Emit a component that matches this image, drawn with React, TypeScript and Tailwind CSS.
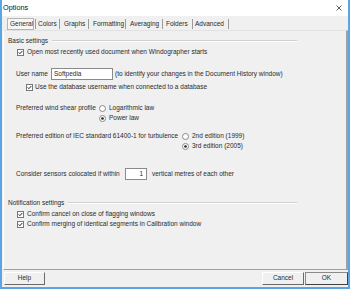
import React from "react";

const font = { fontFamily: '"Liberation Sans", Arial, sans-serif' };

function Check() {
  return (
    <svg width="7" height="7" viewBox="0 0 7 7" className="flex-none">
      <rect x="0.5" y="0.5" width="6" height="6" fill="#fff" stroke="#777" />
      <path d="M1.7 3.4 L2.9 4.7 L5.3 2" fill="none" stroke="#222" strokeWidth="1" />
    </svg>
  );
}

function Radio({ on }: { on?: boolean }) {
  return (
    <svg width="7" height="7" viewBox="0 0 7 7" className="flex-none">
      <circle cx="3.5" cy="3.5" r="3" fill="#fff" stroke="#888" />
      {on && <circle cx="3.5" cy="3.5" r="1.3" fill="#222" />}
    </svg>
  );
}

function Sep() {
  return <div className="w-[1px] h-[10px] bg-[#9a9a9a] flex-none" />;
}

function Tab({ label, w, pl }: { label: string; w: string; pl: string }) {
  return (
    <div className={`${w} ${pl} h-[12px] flex items-center flex-none whitespace-nowrap`}>{label}</div>
  );
}

function GroupTitle({ label }: { label: string }) {
  return (
    <div className="flex items-center h-[10px] w-[293px] pl-[4px]">
      <span className="whitespace-nowrap">{label}</span>
      <div className="flex-1 ml-[4px] h-[2px] border-t border-t-[#d0d0d0] border-b border-b-white" />
    </div>
  );
}

export default function App() {
  return (
    <div
      style={font}
      className="w-[350px] h-[289px] bg-[#f0f0f0] border-x-2 border-b-2 border-[#5aa5e6] flex flex-col text-[6.5px] leading-none text-[#2b2b2b] overflow-hidden"
    >
      {/* Title bar */}
      <div className="h-[16px] bg-white flex items-center justify-between pl-[1px] pr-[6px] flex-none">
        <span className="text-[7.3px] text-[#111]">Options</span>
        <svg width="6" height="6" viewBox="0 0 6 6">
          <path d="M0.5 0.5 L5.5 5.5 M5.5 0.5 L0.5 5.5" stroke="#333" strokeWidth="0.8" />
        </svg>
      </div>

      {/* Tabs */}
      <div className="mt-[2px] h-[12px] flex items-center flex-none">
        <div className="ml-[5px] w-[27px] h-[12px] pl-[2px] flex items-center border border-[#b4b4b4] bg-[#f6f6f6] whitespace-nowrap">
          General
        </div>
        <div className="w-[1px]" />
        <Sep />
        <Tab label="Colors" w="w-[23px]" pl="pl-[2px]" />
        <Sep />
        <Tab label="Graphs" w="w-[28px]" pl="pl-[4px]" />
        <Sep />
        <Tab label="Formatting" w="w-[36px]" pl="pl-[4px]" />
        <Sep />
        <Tab label="Averaging" w="w-[36px]" pl="pl-[4px]" />
        <Sep />
        <Tab label="Folders" w="w-[29px]" pl="pl-[3px]" />
        <Sep />
        <Tab label="Advanced" w="w-[35px]" pl="pl-[2px]" />
        <Sep />
      </div>

      {/* Panel */}
      <div className="ml-[1px] w-[345px] h-[240px] border-t border-t-[#e2e2e2] border-l border-l-white border-r-2 border-r-[#a0a0a0] border-b border-b-[#a0a0a0] flex flex-col flex-none">
        <div className="mt-[5px]">
          <GroupTitle label="Basic settings" />
        </div>
        <div className="mt-[1px] h-[10px] flex items-center pl-[13px]">
          <Check />
          <span className="ml-[3px] whitespace-nowrap">Open most recently used document when Windographer starts</span>
        </div>
        <div className="mt-[11px] h-[12px] flex items-center pl-[12px]">
          <span className="w-[35px] whitespace-nowrap">User name</span>
          <div className="w-[62px] h-[12px] bg-white border border-[#8a8a8a] flex items-center pl-[2px]">Softpedia</div>
          <span className="ml-[2px] whitespace-nowrap">(to identify your changes in the Document History window)</span>
        </div>
        <div className="mt-[2px] h-[10px] flex items-center pl-[22px]">
          <Check />
          <span className="ml-[2px] whitespace-nowrap">Use the database username when connected to a database</span>
        </div>

        <div className="mt-[11px] h-[10px] flex items-center pl-[12px]">
          <span className="w-[83px] whitespace-nowrap">Preferred wind shear profile</span>
          <Radio />
          <span className="ml-[3px] whitespace-nowrap">Logarithmic law</span>
        </div>
        <div className="h-[10px] flex items-center pl-[95px]">
          <Radio on />
          <span className="ml-[3px] whitespace-nowrap">Power law</span>
        </div>

        <div className="mt-[8px] h-[10px] flex items-center pl-[12px]">
          <span className="w-[166px] whitespace-nowrap">Preferred edition of IEC standard 61400-1 for turbulence</span>
          <Radio />
          <span className="ml-[3px] whitespace-nowrap">2nd edition (1999)</span>
        </div>
        <div className="h-[10px] flex items-center pl-[178px]">
          <Radio on />
          <span className="ml-[3px] whitespace-nowrap">3rd edition (2005)</span>
        </div>

        <div className="mt-[17px] h-[12px] flex items-center pl-[12px]">
          <span className="w-[109px] whitespace-nowrap">Consider sensors colocated if within</span>
          <div className="w-[22px] h-[12px] bg-white border border-[#8a8a8a] flex items-center justify-end pr-[3px]">1</div>
          <span className="ml-[5px] whitespace-nowrap">vertical metres of each other</span>
        </div>

        <div className="mt-[18px]">
          <GroupTitle label="Notification settings" />
        </div>
        <div className="mt-[1px] h-[10px] flex items-center pl-[13px]">
          <Check />
          <span className="ml-[3px] whitespace-nowrap">Confirm cancel on close of flagging windows</span>
        </div>
        <div className="h-[10px] flex items-center pl-[13px]">
          <Check />
          <span className="ml-[3px] whitespace-nowrap">Confirm merging of identical segments in Calibration window</span>
        </div>
      </div>

      {/* Buttons */}
      <div className="mt-[2px] flex items-center justify-between pl-[2px]">
        <div className="w-[41px] h-[13px] flex items-center justify-center border border-t-white border-l-white border-r-[#6a6a6a] border-b-[#6a6a6a] bg-[#f0f0f0]">
          Help
        </div>
        <div className="flex">
          <div className="w-[42px] h-[13px] flex items-center justify-center border border-t-white border-l-white border-r-[#6a6a6a] border-b-[#6a6a6a] bg-[#f0f0f0]">
            Cancel
          </div>
          <div className="ml-[1px] w-[43px] h-[13px] flex items-center justify-center border border-t-[#8a8a8a] border-l-[#8a8a8a] border-r-[#404040] border-b-[#404040] bg-[#f0f0f0]">
            OK
          </div>
        </div>
      </div>
    </div>
  );
}
